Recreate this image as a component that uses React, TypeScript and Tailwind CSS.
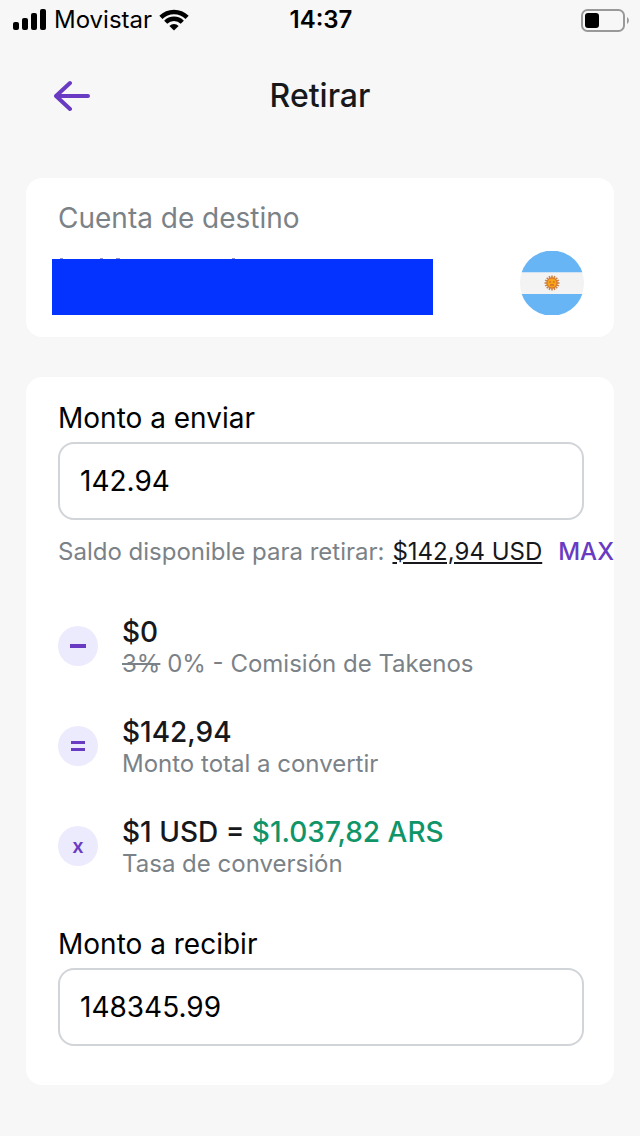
import { useState, type ReactNode } from "react";

function SignalIcon() {
  return (
    <svg viewBox="0 0 34 22" className="h-[22px] w-[34px]" fill="#000" aria-hidden="true">
      <rect x="0" y="13" width="6" height="8" rx="2" />
      <rect x="9" y="9" width="6" height="12" rx="2" />
      <rect x="18" y="4" width="6" height="17" rx="2" />
      <rect x="27" y="0" width="6" height="21" rx="2" />
    </svg>
  );
}

function WifiIcon() {
  return (
    <svg viewBox="0 0 30 22" className="h-[22px] w-[30px]" aria-hidden="true">
      <g fill="none" stroke="#000" strokeWidth="4.4">
        <path d="M1.900 8.400A18.500 18.500 0 0 1 28.100 8.400" />
        <path d="M6.700 13.200A11.700 11.700 0 0 1 23.300 13.200" />
      </g>
      <path d="M10.400 16.900A6.500 6.500 0 0 1 19.600 16.900L15 21.500Z" fill="#000" />
    </svg>
  );
}

function BatteryIcon() {
  return (
    <svg viewBox="0 0 48 23" className="h-[23px] w-12" aria-hidden="true">
      <rect x="1" y="1" width="42" height="21" rx="5.500" fill="none" stroke="#999" strokeWidth="2" />
      <rect x="4" y="4" width="14" height="15" rx="3" fill="#000" />
      <path d="M46 8C48.500 9.500 48.500 13.500 46 15Z" fill="#999" />
    </svg>
  );
}

function BackIcon() {
  return (
    <svg
      viewBox="0 0 36 32"
      className="h-8 w-9"
      fill="none"
      stroke="#693bc3"
      strokeWidth="4"
      strokeLinecap="round"
      strokeLinejoin="round"
      aria-hidden="true"
    >
      <path d="M34 16H2M16 3L2 16L16 29" />
    </svg>
  );
}

function ArgentinaFlag() {
  const rays = Array.from({ length: 16 }, (_, i) => i * 22.5);

  return (
    <svg viewBox="0 0 64 64" className="size-16" role="img" aria-label="Argentina">
      <circle cx="32" cy="32" r="32" fill="#f3f3f3" />
      <path d="M1.700 21.300A32 32 0 0 1 62.300 21.300Z" fill="#68b5f6" />
      <path d="M1.700 43A32 32 0 0 0 62.300 43Z" fill="#68b5f6" />
      {rays.map((angle) => (
        <path
          key={angle}
          d="M32 28V24.500"
          stroke="#c9834a"
          strokeWidth="1.6"
          transform={`rotate(${angle} 32 32)`}
        />
      ))}
      <circle cx="32" cy="32" r="5" fill="#f9a51a" stroke="#d8702a" />
      <path d="M29.500 31H31M33 31H34.500M30 34H34" stroke="#b5562a" fill="none" />
    </svg>
  );
}

type AmountFieldProps = {
  id: string;
  label: string;
  value: string;
  onChange: (value: string) => void;
};

function AmountField({ id, label, value, onChange }: AmountFieldProps) {
  return (
    <div>
      <label htmlFor={id} className="mb-1 block text-[28px] leading-10 text-black">
        {label}
      </label>
      <input
        id={id}
        type="text"
        inputMode="decimal"
        value={value}
        onChange={(e) => onChange(e.target.value)}
        className="block h-[78px] w-full rounded-2xl border-2 border-[#d1d4d8] bg-white px-5 text-[28px] text-black outline-none focus:border-[#693bc3]"
      />
    </div>
  );
}

type DetailRowProps = {
  icon: ReactNode;
  title: ReactNode;
  children: ReactNode;
};

function DetailRow({ icon, title, children }: DetailRowProps) {
  return (
    <li className="flex gap-6">
      <span className="mt-2.5 flex size-10 shrink-0 items-center justify-center rounded-full bg-[#eceafd] text-[#693bc3]">
        {icon}
      </span>
      <div>
        <p className="text-[28px] leading-8 font-medium text-[#16181b]">{title}</p>
        <p className="text-2xl leading-8 text-[#7b8287]">{children}</p>
      </div>
    </li>
  );
}

export default function App() {
  const [sendAmount, setSendAmount] = useState("142.94");
  const [receiveAmount, setReceiveAmount] = useState("148345.99");

  return (
    <div className="min-h-screen bg-[#f7f7f7] font-['Inter',sans-serif]">
      {/* Status bar */}
      <div className="grid h-10 grid-cols-3 items-center pr-[11px] pl-[13px] text-black">
        <div className="flex items-center gap-[7px]">
          <SignalIcon />
          <span className="text-2xl">Movistar</span>
          <WifiIcon />
        </div>
        <span className="text-center text-2xl font-semibold">14:37</span>
        <div className="flex justify-end">
          <BatteryIcon />
        </div>
      </div>

      <header className="grid h-28 grid-cols-3 items-center px-[54px]">
        <button type="button" aria-label="Volver" className="w-9">
          <BackIcon />
        </button>
        <h1 className="text-center text-[32px] font-medium text-[#16181b]">Retirar</h1>
      </header>

      <main className="flex flex-col gap-10 p-[26px]">
        <section className="rounded-2xl bg-white pt-5 pr-[30px] pb-[22px] pl-8">
          <h2 className="text-[28px] leading-10 text-[#7b8287]">Cuenta de destino</h2>
          <div className="mt-[13px] flex items-end justify-between">
            {/* Account holder stays covered */}
            <div className="-ml-1.5 w-[381px]">
              <svg viewBox="0 0 381 1" className="block h-px w-full" fill="#8d92c4" aria-hidden="true">
                <path d="M8 0h3v1h-3zM48 0h3v1h-3zM64 0h4v1h-4zM180 0h3v1h-3z" />
              </svg>
              <div className="h-14 bg-[#0432ff]" />
            </div>
            <ArgentinaFlag />
          </div>
        </section>

        <section className="rounded-2xl bg-white pt-[21px] pr-[30px] pb-[39px] pl-8">
          <AmountField id="send" label="Monto a enviar" value={sendAmount} onChange={setSendAmount} />
          <p className="mt-3 flex text-2xl leading-10 whitespace-nowrap text-[#7b8287]">
            Saldo disponible para retirar:
            <span className="ml-2 text-[#16181b] underline">$142,94 USD</span>
            <button
              type="button"
              onClick={() => setSendAmount("142.94")}
              className="ml-4 font-medium text-[#693bc3]"
            >
              MAX
            </button>
          </p>

          <ul className="my-11 flex flex-col gap-9">
            <DetailRow icon={<span className="h-1 w-4 bg-current" />} title="$0">
              <s>3%</s> 0% - Comisión de Takenos
            </DetailRow>
            <DetailRow
              icon={<span className="h-2.5 w-3.5 border-y-3 border-current" />}
              title="$142,94"
            >
              Monto total a convertir
            </DetailRow>
            <DetailRow
              icon={<span className="text-xl font-semibold">x</span>}
              title={
                <>
                  $1 USD = <span className="text-[#0f9568]">$1.037,82 ARS</span>
                </>
              }
            >
              Tasa de conversión
            </DetailRow>
          </ul>

          <AmountField
            id="receive"
            label="Monto a recibir"
            value={receiveAmount}
            onChange={setReceiveAmount}
          />
        </section>
      </main>
    </div>
  );
}
